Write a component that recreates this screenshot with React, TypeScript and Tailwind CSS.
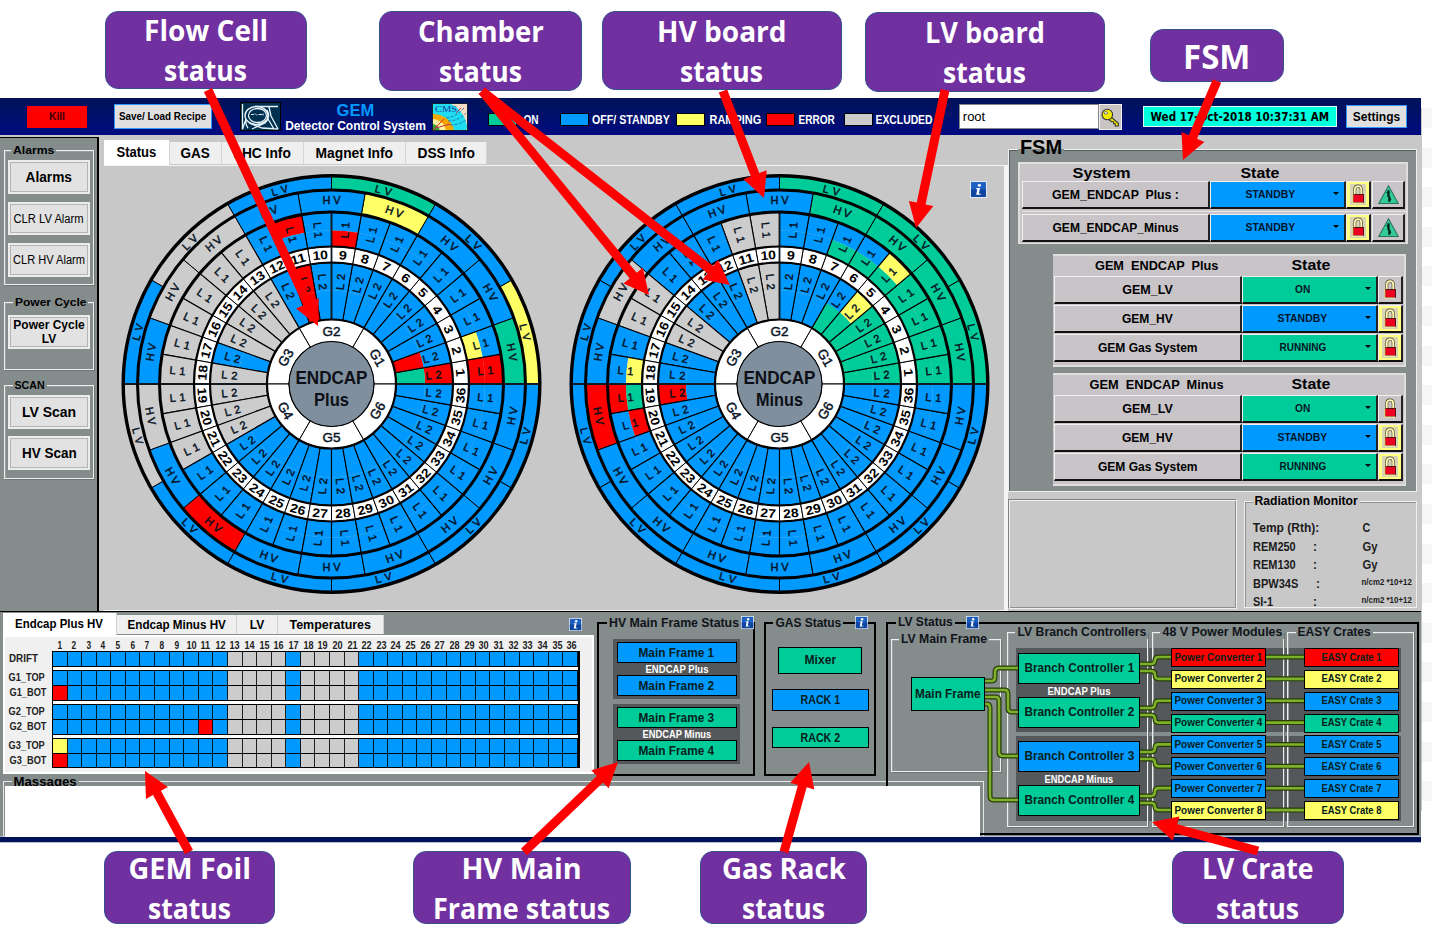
import React, { useLayoutEffect, useRef, useState } from 'react';
import clsx from 'clsx';

type Tone = 'b' | 'g' | 'r' | 'y' | 'x';

const HEX: Record<Tone, string> = { b: '#0099ff', g: '#00cc99', r: '#ff0000', y: '#ffff66', x: '#cccccc' };
const BG: Record<Tone, string> = {
  b: 'bg-[#0099ff]',
  g: 'bg-[#00cc99]',
  r: 'bg-[#ff0000]',
  y: 'bg-[#ffff66]',
  x: 'bg-[#cccccc]',
};

/* Label stretched horizontally to a fixed width */
function Fit({ w, className, children }: { w: number; className?: string; children: React.ReactNode }) {
  const ref = useRef<HTMLSpanElement>(null);
  const [k, setK] = useState(1);
  useLayoutEffect(() => {
    if (ref.current && ref.current.offsetWidth) setK(w / ref.current.offsetWidth);
  }, [w]);
  return (
    <span className={clsx('inline-flex justify-center whitespace-pre', className)} style={{ width: w }}>
      <span ref={ref} className="shrink-0" style={{ transform: `scaleX(${k})` }}>
        {children}
      </span>
    </span>
  );
}

/* ---------- icons ---------- */
function Info({ className }: { className: string }) {
  return (
    <svg viewBox="0 0 16 16" className={className}>
      <rect x="0.5" y="0.5" width="15" height="15" fill="#1c5fc0" stroke="#dfe8f4" />
      <rect x="1" y="8" width="14" height="7" fill="#0f459f" />
      <circle cx="8.8" cy="4" r="1.5" fill="#fff" />
      <path d="M6 6.6H9.4L8.3 12H10.2L10 13H5.8L6.9 7.8H5.8Z" fill="#fff" />
    </svg>
  );
}

function Lock() {
  return (
    <svg viewBox="0 0 12 20" className="h-[20px] w-[12px]">
      <path d="M2.8 11V5.5C2.8 0.9 9.2 0.9 9.2 5.5V11" fill="none" stroke="#4a4420" strokeWidth="3" />
      <path d="M2.8 11V5.5C2.8 1 9.2 1 9.2 5.5V11" fill="none" stroke="#fff8b8" strokeWidth="1.8" />
      <rect x="1" y="10.5" width="10.5" height="8" fill="#f00020" stroke="#300" strokeWidth="0.8" />
      <path d="M0.8 10V19H11" fill="none" stroke="#ffef90" strokeWidth="1" />
    </svg>
  );
}

function Warn() {
  return (
    <svg viewBox="0 0 20 19" className="h-[20px] w-[21px]">
      <path d="M10 0.8L19.3 17.5H0.7Z" fill="#33cc99" stroke="#28705a" strokeWidth="1" />
      <path d="M10 5V11.5M10.8 11V16" stroke="#06251c" strokeWidth="2.2" />
      <path d="M8 7L10 8M11 12.5L12.5 14" stroke="#06251c" strokeWidth="1" />
    </svg>
  );
}

function Key() {
  return (
    <svg viewBox="0 0 18 18" className="h-[19px] w-[19px]">
      <path d="M9 8L16.5 14.5V17H13.5V15H12V13H10L7 10.5Z" fill="#e8e000" stroke="#333" strokeWidth="1" />
      <circle cx="6" cy="6.2" r="5" fill="#f4ec00" stroke="#333" strokeWidth="1" />
      <ellipse cx="4.6" cy="4.6" rx="1.7" ry="1.2" fill="#fff" stroke="#444" strokeWidth="0.7" />
    </svg>
  );
}

function CernLogo() {
  return (
    <svg viewBox="0 0 41 29" className="h-[29px] w-[41px]">
      <rect x="0.5" y="0.5" width="40" height="28" fill="#003050" stroke="#000" />
      <g fill="none" stroke="#e8f4fa" strokeWidth="1.3">
        <path d="M2.5 2V27.5M15 4.5H38" />
        <ellipse cx="16.5" cy="13.5" rx="11.5" ry="9" />
        <ellipse cx="17.5" cy="13.5" rx="9" ry="7" />
        <path d="M27 8Q31 15 25 21L12 27M29 5L31 14L38 27M6 17L2.5 27M9 21L22 26L38 27M28 17L34 27M6 17Q5 22 8 26" />
        <path d="M11 12.5H14M15 11.5L17 13.5M18.5 12.5H22M23 11.5V13.5" strokeWidth="1" />
      </g>
    </svg>
  );
}

function CmsLogo() {
  return (
    <svg viewBox="0 0 36 28" className="h-[28px] w-[36px]">
      <rect width="36" height="28" fill="#f6dcc4" />
      <path d="M0 0H16A28 28 0 0 1 35 24L34 28H0Z" fill="#20dcf0" />
      <path d="M0 11A22 22 0 0 1 22 26L20 28H0Z" fill="#f5a800" />
      <path d="M0 16A14 14 0 0 1 14 28H0Z" fill="#fff3a0" />
      <path d="M0 21A8 8 0 0 1 8 28H0Z" fill="#35a040" />
      <g fill="none" strokeWidth="1">
        <path d="M1 27L12 16" stroke="#e02020" />
        <path d="M4 25L18 21M24 10L29 5" stroke="#c03050" />
        <path d="M14 15Q24 14 32 5M16 18Q26 18 34 10M18 22Q28 22 34 17" stroke="#2060b0" strokeWidth="0.8" strokeDasharray="3 1.5" />
      </g>
      <text x="3" y="8.5" fontSize="8.5" fontFamily="Liberation Serif, serif" fill="#2038a0" textLength="22" lengthAdjust="spacingAndGlyphs">
        CMS
      </text>
      <rect x="0.5" y="0.5" width="35" height="27" fill="none" stroke="#123" />
    </svg>
  );
}

/* ---------- detector wheels ---------- */
const CX = 212.5;
const CY = 212;
const R = { lv: 208.3, hv: 194, l1: 172, num: 137.5, l2: 121.5, g: 64.5, core: 42.5 };

function pt(r: number, deg: number): [number, number] {
  const a = (deg * Math.PI) / 180;
  return [CX + r * Math.cos(a), CY - r * Math.sin(a)];
}

function wedge(r0: number, r1: number, a0: number, a1: number) {
  const [x1, y1] = pt(r1, a0);
  const [x2, y2] = pt(r1, a1);
  const [x3, y3] = pt(r0, a1);
  const [x4, y4] = pt(r0, a0);
  return `M${x1} ${y1}A${r1} ${r1} 0 0 0 ${x2} ${y2}L${x3} ${y3}A${r0} ${r0} 0 0 1 ${x4} ${y4}Z`;
}

function tangent(a: number) {
  return a < 180 ? 90 - a : 270 - a;
}

function radial(a: number) {
  if (a < 90) return -a;
  if (a < 270) return 180 - a;
  return 360 - a;
}

interface WheelData {
  name: string;
  lv: string;
  hv: string;
  l1: string[];
  l2: string[];
}

function Label({ r, a, rot, size, w, bold, children }: { r: number; a: number; rot: number; size: number; w: number; bold?: boolean; children: string }) {
  const [x, y] = pt(r, a);
  const ink = bold ? '#000' : '#06121f';
  return (
    <text
      transform={`translate(${x} ${y}) rotate(${rot})`}
      textAnchor="middle"
      dy={size * 0.36}
      fontSize={size}
      textLength={w}
      lengthAdjust={bold ? 'spacingAndGlyphs' : 'spacing'}
      fontWeight={bold ? 'bold' : 'normal'}
      fill={ink}
      stroke={bold ? 'none' : ink}
      strokeWidth="0.45"
    >
      {children}
    </text>
  );
}

/* Each chamber code holds the outer half first, then the inner half */
function Wheel({ data }: { data: WheelData }) {
  const split = { l1: 153.5, l2: 93.5 };
  return (
    <svg viewBox="0 0 425 424" className="h-[424px] w-[425px] shrink-0" fontFamily="Liberation Sans, Arial, sans-serif">
      {data.lv.split('').map((c, i) => (
        <path key={i} d={wedge(R.hv, R.lv, i * 30, i * 30 + 30)} fill={HEX[c as Tone]} stroke="#000" strokeWidth="1" />
      ))}
      {data.hv.split('').map((c, i) => (
        <path key={i} d={wedge(R.l1, R.hv, i * 20, i * 20 + 20)} fill={HEX[c as Tone]} stroke="#000" strokeWidth="1" />
      ))}
      {data.l1.map((c, i) => (
        <g key={i}>
          <path d={wedge(split.l1, R.l1, i * 10, i * 10 + 10)} fill={HEX[c[0] as Tone]} />
          <path d={wedge(R.num, split.l1, i * 10, i * 10 + 10)} fill={HEX[(c[1] ?? c[0]) as Tone]} />
          <path d={wedge(R.num, R.l1, i * 10, i * 10 + 10)} fill="none" stroke="#000" strokeWidth="1.1" />
        </g>
      ))}
      {data.l2.map((c, i) => (
        <g key={i}>
          <path d={wedge(split.l2, R.l2, i * 10, i * 10 + 10)} fill={HEX[c[0] as Tone]} />
          <path d={wedge(R.g, split.l2, i * 10, i * 10 + 10)} fill={HEX[(c[1] ?? c[0]) as Tone]} />
          <path d={wedge(R.g, R.l2, i * 10, i * 10 + 10)} fill="none" stroke="#000" strokeWidth="1.1" />
          <path d={wedge(R.l2, R.num, i * 10, i * 10 + 10)} fill="#fff" stroke="#000" strokeWidth="1" />
        </g>
      ))}
      {[0, 60, 120, 180, 240, 300].map((a) => (
        <path key={a} d={wedge(R.core, R.g, a, a + 60)} fill="#fff" stroke="#000" strokeWidth="1" />
      ))}
      <path d={`M${CX} ${CY - R.g}V${CY - R.l1}M${CX + R.g} ${CY}H${CX + R.lv}M${CX - R.g} ${CY}H${CX - R.lv}`} stroke="#101820" strokeWidth="1.8" />
      <g fill="none" stroke="#000">
        <circle cx={CX} cy={CY} r={R.lv} strokeWidth="3.4" />
        <circle cx={CX} cy={CY} r={R.hv} strokeWidth="3" />
        <circle cx={CX} cy={CY} r={R.l1} strokeWidth="3" />
        <circle cx={CX} cy={CY} r={R.num} strokeWidth="2.2" />
        <circle cx={CX} cy={CY} r={R.l2} strokeWidth="2.2" />
        <circle cx={CX} cy={CY} r={R.g} strokeWidth="2.2" />
      </g>
      <circle cx={CX} cy={CY} r={R.core} fill="#808f9e" stroke="#000" strokeWidth="1.2" />
      {data.lv.split('').map((_, i) => (
        <Label key={i} r={200.5} a={i * 30 + 15} rot={tangent(i * 30 + 15)} size={10.5} w={17}>
          LV
        </Label>
      ))}
      {data.hv.split('').map((_, i) => (
        <Label key={i} r={183.5} a={i * 20 + 10} rot={tangent(i * 20 + 10)} size={11} w={18}>
          HV
        </Label>
      ))}
      {data.l1.map((_, i) => (
        <g key={i}>
          <Label r={154.5} a={i * 10 + 5} rot={radial(i * 10 + 5)} size={11} w={16}>
            L1
          </Label>
          <Label r={102.5} a={i * 10 + 5} rot={radial(i * 10 + 5)} size={11} w={16}>
            L2
          </Label>
          <Label r={129.5} a={i * 10 + 5} rot={tangent(i * 10 + 5)} size={12.5} w={i < 9 ? 8 : 15.5} bold>
            {String(i + 1)}
          </Label>
        </g>
      ))}
      {[1, 2, 3, 4, 5, 6].map((n) => (
        <Label key={n} r={53} a={n * 60 - 30} rot={tangent(n * 60 - 30)} size={13.5} w={18}>
          {`G${n}`}
        </Label>
      ))}
      <g fontSize="17.5" fontWeight="bold" textAnchor="middle" fill="#0c1016">
        <text x={CX} y={CY - 0.5} textLength="72" lengthAdjust="spacingAndGlyphs">
          ENDCAP
        </text>
        <text x={CX} y={CY + 22} textLength={data.name === 'Plus' ? 35 : 47} lengthAdjust="spacingAndGlyphs">
          {data.name}
        </text>
      </g>
    </svg>
  );
}

const B15 = Array<string>(15).fill('b');
const PLUS: WheelData = {
  name: 'Plus',
  lv: 'ybgbxbxbbbbb',
  hv: 'gbbybbxxbxbrbbbbbb',
  l1: ['r', 'by', 'b', 'b', 'b', 'b', 'b', 'b', 'br', 'b', 'rb', 'b', 'x', 'x', 'x', 'x', 'x', 'x', 'x', 'x', 'x', ...B15],
  l2: ['rg', 'br', 'b', 'b', 'b', 'b', 'b', 'b', 'b', 'b', 'r', 'b', 'x', 'x', 'x', 'x', 'b', 'x', 'x', 'x', 'x', ...B15],
};
const MINUS: WheelData = {
  name: 'Minus',
  lv: 'gggbbbbbbbbb',
  hv: 'ggggbbbxbrbbbbbbbb',
  l1: ['g', 'g', 'g', 'g', 'yg', 'bg', 'bg', 'b', 'b', 'x', 'x', 'b', 'b', 'b', 'x', 'x', 'b', 'by', 'rg', 'br', 'b', ...B15],
  l2: ['g', 'g', 'g', 'g', 'yg', 'bg', 'b', 'b', 'b', 'x', 'x', 'b', 'b', 'b', 'x', 'x', 'b', 'b', 'rb', 'b', 'b', ...B15],
};

/* ---------- header ---------- */
function Legend({ tone, label, w, className }: { tone: Tone; label: string; w: number; className: string }) {
  return (
    <div className={clsx('flex h-full items-center', className)}>
      <span className={clsx('h-[13px] w-[29px] border border-black', BG[tone])} />
      <Fit w={w} className="ml-[3px] text-[12px] font-bold text-white">
        {label}
      </Fit>
    </div>
  );
}

function Header() {
  return (
    <header className="flex h-[37px] shrink-0 bg-gradient-to-b from-[#001258] to-[#000a80]">
      <button className="mt-[8px] ml-[27px] flex h-[22px] w-[60px] items-center justify-center bg-[#ff0000] text-[11.5px] font-bold text-[#3a0000]">
        <Fit w={16}>Kill</Fit>
      </button>
      <button className="mt-[6px] ml-[27px] flex h-[25px] w-[98px] items-center justify-center border border-[#3399ff] bg-[#e0e0e0] text-[11px] font-bold">
        <Fit w={87}>Save/ Load Recipe</Fit>
      </button>
      <div className="mt-[4px] ml-[28px]">
        <CernLogo />
      </div>
      <div className="mt-[4px] ml-[3px] flex w-[143px] flex-col items-center font-bold">
        <Fit w={38} className="text-[17px] leading-[18px] text-[#0099ff]">GEM</Fit>
        <Fit w={141} className="text-[12px] leading-[12px] text-white">Detector Control System</Fit>
      </div>
      <div className="mt-[5px] ml-[5px]">
        <CmsLogo />
      </div>
      <div className="flex pt-[6px]">
        <Legend tone="g" label="ON" w={15} className="ml-[20px] [&>span:last-child]:ml-[6px]" />
        <Legend tone="b" label="OFF/ STANDBY" w={78} className="ml-[22px]" />
        <Legend tone="y" label="RAMPING" w={52} className="ml-[6px] [&>span:last-child]:ml-[4px]" />
        <Legend tone="r" label="ERROR" w={36} className="ml-[5px] [&>span:last-child]:ml-[4px]" />
        <Legend tone="x" label="EXCLUDED" w={57} className="ml-[9px] [&>span:last-child]:ml-[2px]" />
      </div>
      <div className="mt-[6px] ml-auto flex h-[26px] w-[163px]">
        <div className="h-[25px] w-[140px] border border-[#888] bg-white pl-[3px] text-[13px] leading-[23px]">
          <Fit w={22}>root</Fit>
        </div>
        <div className="flex h-[26px] w-[23px] items-center justify-center border border-[#f0f0f0] bg-[#c8c4c4]">
          <Key />
        </div>
      </div>
      <div className="mt-[8px] ml-[21px] flex h-[21px] w-[194px] items-center justify-center border border-[#d8f8f0] bg-[#00ffdd] font-['DejaVu_Sans'] text-[11.5px] leading-none font-bold">
        <Fit w={179} className="pt-[2px]">Wed 17-Oct-2018 10:37:31 AM</Fit>
      </div>
      <button className="mt-[7px] mr-[14px] ml-[9px] flex h-[23px] w-[61px] items-center justify-center border border-[#3399ff] bg-[#e0e0e0] text-[12px] font-bold">
        <Fit w={47}>Settings</Fit>
      </button>
    </header>
  );
}

/* ---------- group frame ---------- */
function Group({
  title,
  w,
  className,
  titleClass,
  children,
}: {
  title: string;
  w: number;
  className: string;
  titleClass: string;
  children?: React.ReactNode;
}) {
  return (
    <section className={clsx('relative shrink-0', className)}>
      <h2 className={clsx('absolute flex px-[2px] leading-none font-bold', titleClass)}>
        <Fit w={w}>{title}</Fit>
      </h2>
      {children}
    </section>
  );
}

const ETCH = 'border border-[#eef0f0] shadow-[inset_1px_1px_0_#9a9f9f,1px_1px_0_#6c7474]';

function SideButton({ label, w, className }: { label: string; w: number; className: string }) {
  return (
    <button className={clsx('flex w-[82px] shrink-0 items-center justify-center border-2 border-[#ececec] bg-[#e2e2e2] shadow-[inset_0_0_0_1px_#b4b4b4]', className)}>
      <Fit w={w}>{label}</Fit>
    </button>
  );
}

function Sidebar() {
  return (
    <aside className="flex w-[99px] shrink-0 flex-col border-t border-r-2 border-black bg-[#848c8c] pl-[4px]">
      <Group title="Alarms" w={41} className={clsx('mt-[12px] flex h-[135px] w-[90px] flex-col gap-[8px] pt-[9px] pl-[3px]', ETCH)} titleClass="left-[6px] -top-[6px] bg-[#848c8c] text-[11px]">
        <SideButton label="Alarms" w={46} className="h-[34px] text-[14px] font-bold" />
        <SideButton label="CLR LV Alarm" w={70} className="h-[33px] text-[12px]" />
        <SideButton label="CLR HV Alarm" w={72} className="h-[34px] text-[12px]" />
      </Group>
      <Group title="Power Cycle" w={71} className={clsx('mt-[17px] h-[68px] w-[90px] pt-[12px] pl-[3px]', ETCH)} titleClass="left-[8px] -top-[6px] bg-[#848c8c] text-[11px]">
        <button className="flex h-[34px] w-[82px] flex-col items-center justify-center border-2 border-[#ececec] bg-[#e2e2e2] text-[12px] leading-[14px] font-bold shadow-[inset_0_0_0_1px_#b4b4b4]">
          <Fit w={71}>Power Cycle</Fit>
          <Fit w={14}>LV</Fit>
        </button>
      </Group>
      <Group title="SCAN" w={30} className={clsx('mt-[15px] flex h-[94px] w-[90px] flex-col gap-[7px] pt-[9px] pl-[3px]', ETCH)} titleClass="left-[8px] -top-[6px] bg-[#848c8c] text-[11px]">
        <SideButton label="LV Scan" w={54} className="h-[34px] text-[14px] font-bold" />
        <SideButton label="HV Scan" w={55} className="h-[34px] text-[14px] font-bold" />
      </Group>
    </aside>
  );
}

/* ---------- centre panel ---------- */
function CenterTab({ label, w, className }: { label: string; w: number; className: string }) {
  return (
    <div className={clsx('flex items-center justify-center border-r border-[#d4d4d4] text-[14px] font-bold', className)}>
      <Fit w={w}>{label}</Fit>
    </div>
  );
}

function CenterPanel() {
  return (
    <main className="ml-[5px] flex w-[904px] shrink-0 flex-col">
      <nav className="flex h-[28px] items-end">
        <CenterTab label="Status" w={40} className="h-[25px] w-[66px] bg-white" />
        <CenterTab label="GAS" w={29} className="mb-px h-[22px] w-[52px] bg-[#efefef]" />
        <CenterTab label="LHC Info" w={57} className="mb-px h-[22px] w-[82px] bg-[#efefef]" />
        <CenterTab label="Magnet Info" w={78} className="mb-px h-[22px] w-[102px] bg-[#efefef]" />
        <CenterTab label="DSS Info" w={57} className="mb-px h-[22px] w-[81px] bg-[#efefef]" />
      </nav>
      <div className="relative flex flex-1 gap-[23px] border-t border-r-4 border-b border-[#f4f4f4] bg-[#c8c8c8] pt-[6px] pl-[15px]">
        <Wheel data={PLUS} />
        <Wheel data={MINUS} />
        <Info className="absolute top-[15px] right-[17px] h-[17px] w-[17px]" />
      </div>
    </main>
  );
}

/* ---------- FSM ---------- */
const CELL = 'flex items-center justify-center border-t border-l border-r-2 border-b-2 border-t-[#f0f0f0] border-l-[#f0f0f0] border-r-[#222] border-b-[#111] font-bold';

function FsmRow({ name, nameW, state, tone, stateW, lit, warn }: { name: string; nameW: number; state: string; tone: Tone; stateW: number; lit?: boolean; warn?: boolean }) {
  return (
    <div className="flex h-[28px]">
      <div className={clsx(CELL, 'w-[188px] bg-[#c8c4c8] pt-px text-[12.5px]')}>
        <Fit w={nameW}>{name}</Fit>
      </div>
      <div className={clsx(CELL, 'relative w-[136px] pt-px pr-[14px] text-[11.5px] text-[#001428]', BG[tone])}>
        <Fit w={stateW}>{state}</Fit>
        <span className="absolute top-[10px] right-[5px] border-x-[3px] border-t-[3px] border-x-transparent border-t-black" />
      </div>
      <div className={clsx(CELL, 'w-[25px]', lit ? 'bg-[#ffff80]' : 'bg-[#c8c4c8]')}>
        <span className={clsx('flex h-[21px] w-[16px] justify-center', lit && 'bg-[#d8d4b8]')}>
          <Lock />
        </span>
      </div>
      {warn && (
        <div className={clsx(CELL, 'ml-px w-[33px] bg-[#c8c4c8]')}>
          <Warn />
        </div>
      )}
    </div>
  );
}

function EndcapFsm({ title, w, className }: { title: string; w: number; className: string }) {
  return (
    <div className={clsx('ml-[44px] h-[113px] w-[353px] border-2 border-l-0 border-[#dedede] bg-[#c8c4c8] pl-px', className)}>
      <div className="flex h-[20px] items-center font-bold">
        <div className="flex w-[198px] justify-center pl-[8px] text-[12.5px]">
          <Fit w={w}>{title}</Fit>
        </div>
        <div className="flex w-[118px] justify-center pb-[2px] text-[15.5px] leading-none">
          <Fit w={39}>State</Fit>
        </div>
      </div>
      <div className="flex flex-col gap-[1px]">
        <FsmRow name="GEM_LV" nameW={50} state="ON" stateW={15} tone="g" />
        <FsmRow name="GEM_HV" nameW={51} state="STANDBY" stateW={50} tone="b" lit />
        <FsmRow name="GEM Gas System" nameW={100} state="RUNNING" stateW={47} tone="g" lit />
      </div>
    </div>
  );
}

function RightPanel() {
  const rad: [string, number, string, number, boolean][] = [
    ['Temp (Rth):', 66, 'C', 8, false],
    ['REM250', 43, 'Gy', 15, false],
    ['REM130', 43, 'Gy', 15, false],
    ['BPW34S', 45, 'n/cm2 *10+12', 50, true],
    ['SI-1', 20, 'n/cm2 *10+12', 50, true],
  ];
  return (
    <div className="flex w-[413px] shrink-0 flex-col">
      <Group
        title="FSM"
        w={42}
        className="mt-[12px] h-[343px] w-[409px] border border-[#f0f0f0] bg-[#848c8c] shadow-[inset_1px_1px_0_#5a6060]"
        titleClass="left-[9px] -top-[13px] text-[20px] bg-[linear-gradient(#c8c8c8_12px,#848c8c_12px)]"
      >
        <div className="mt-[12px] ml-[9px] h-[82px] w-[390px] border-2 border-b-[1px] border-[#dedede] bg-[#c8c4c8] pl-[2px]">
          <div className="flex h-[17px] items-center text-[15.5px] leading-none font-bold">
            <div className="flex w-[160px] justify-center">
              <Fit w={58}>System</Fit>
            </div>
            <div className="flex w-[156px] justify-center">
              <Fit w={39}>State</Fit>
            </div>
          </div>
          <FsmRow name="GEM_ENDCAP  Plus :" nameW={127} state="STANDBY" stateW={50} tone="b" lit warn />
          <div className="mt-[2px] mb-[2px] h-px bg-[#e8e8e8]" />
          <FsmRow name="GEM_ENDCAP_Minus" nameW={126} state="STANDBY" stateW={50} tone="b" lit warn />
        </div>
        <EndcapFsm title="GEM  ENDCAP  Plus" w={123} className="mt-[10px]" />
        <EndcapFsm title="GEM  ENDCAP  Minus" w={134} className="mt-[6px]" />
      </Group>
      <div className="mt-[7px] flex">
        <div className="h-[110px] w-[229px] border border-[#808080] border-r-[#f0f0f0] border-b-[#f0f0f0] shadow-[inset_1px_1px_0_#f0f0f0,inset_-1px_-1px_0_#909090]" />
        <Group title="Radiation Monitor" w={103} className="mt-[2px] ml-[7px] h-[107px] w-[173px] border border-[#f0f0f0] pt-[17px] pl-[8px] shadow-[inset_1px_1px_0_#909090]" titleClass="left-[8px] -top-[7px] bg-[#c8c8c8] text-[12.5px]">
          {rad.map(([n, w, v, vw, small], i) => (
            <div key={n} className="flex h-[18.5px] items-center text-[12px] font-bold text-[#1c1c1c]">
              <span className="flex w-[60px]">
                <Fit w={w}>{n}</Fit>
              </span>
              <span className={i === 3 ? 'w-[49px] pl-[3px]' : 'w-[49px]'}>{i > 0 ? ':' : ''}</span>
              <Fit w={vw} className={small ? 'pb-[3px] text-[9px]' : ''}>
                {v}
              </Fit>
            </div>
          ))}
        </Group>
      </div>
    </div>
  );
}

/* ---------- foil table ---------- */
function foil(bad: Record<number, Tone>): Tone[] {
  return Array.from({ length: 36 }, (_, i) => {
    const n = i + 1;
    if (bad[n]) return bad[n];
    return n >= 13 && n <= 21 && n !== 17 ? 'x' : 'b';
  });
}

const FOILS: { name: string; w: number; cells: Tone[]; gap: boolean }[] = [
  { name: 'DRIFT', w: 29, cells: foil({}), gap: true },
  { name: 'G1_TOP', w: 36, cells: foil({}), gap: false },
  { name: 'G1_BOT', w: 37, cells: foil({ 1: 'r' }), gap: true },
  { name: 'G2_TOP', w: 36, cells: foil({}), gap: false },
  { name: 'G2_BOT', w: 37, cells: foil({ 11: 'r' }), gap: true },
  { name: 'G3_TOP', w: 36, cells: foil({ 1: 'y' }), gap: false },
  { name: 'G3_BOT', w: 37, cells: foil({ 1: 'r' }), gap: false },
];

function FoilPanel() {
  const tabs: [string, number, string][] = [
    ['Endcap Plus HV', 88, 'h-[22px] w-[114px] bg-white'],
    ['Endcap Minus HV', 98, 'h-[19px] mb-[1px] w-[120px] bg-[#efefef]'],
    ['LV', 14, 'h-[19px] mb-[1px] w-[41px] bg-[#efefef]'],
    ['Temperatures', 81, 'h-[19px] mb-[1px] w-[106px] bg-[#efefef]'],
  ];
  return (
    <div className="relative w-[594px] shrink-0 pl-[3px]">
      <div className="flex h-[23px] items-end">
        {tabs.map(([t, w, c]) => (
          <div key={t} className={clsx('flex items-center justify-center border-r border-[#d0d0d0] text-[12px] font-bold', c)}>
            <Fit w={w}>{t}</Fit>
          </div>
        ))}
      </div>
      <Info className="absolute top-[6px] left-[569px] h-[13px] w-[13px]" />
      <div className="h-[139px] w-[591px] border-2 border-white bg-[#f0f0f0] pt-[3px] pl-[4px]">
        <div className="ml-[43px] flex h-[11px] w-[527px]">
          {Array.from({ length: 36 }, (_, i) => (
            <span key={i} className="flex flex-1 justify-center text-[10px] leading-[11px] font-bold text-[#222]">
              <Fit w={i < 9 ? 5 : 10}>{i + 1}</Fit>
            </span>
          ))}
        </div>
        {FOILS.map((f) => (
          <div key={f.name} className={clsx('flex', f.gap ? 'h-[19px]' : 'h-[15px]')}>
            <div className="flex h-[15px] w-[43px] items-center text-[10.5px] font-bold text-[#222]">
              <Fit w={f.w}>{f.name}</Fit>
            </div>
            <div className="flex w-[528px] flex-col border-r-2 border-black">
              <div className="flex h-[15px] border-t border-l border-black">
                {f.cells.map((c, i) => (
                  <span key={i} className={clsx('flex-1 border-r border-black/85', BG[c])} />
                ))}
              </div>
              {f.gap && <span className="h-[4px] border-t border-l border-black bg-white" />}
              {f.name === 'G3_BOT' && <span className="h-px bg-black" />}
            </div>
          </div>
        ))}
      </div>
    </div>
  );
}

/* ---------- status boxes ---------- */
function Box({ label, w, tone, className }: { label: string; w: number; tone: Tone; className: string }) {
  return (
    <div className={clsx('relative flex shrink-0 items-center justify-center border border-black text-[#06201c]', BG[tone], className)}>
      <Fit w={w}>{label}</Fit>
    </div>
  );
}

function Caption({ label, className, w = 63 }: { label: string; className: string; w?: number }) {
  return (
    <div className={clsx('relative flex items-center justify-center text-[10px] font-bold text-white', className)}>
      <Fit w={w}>{label}</Fit>
    </div>
  );
}

const BLACK_TITLE = '-top-[7px] bg-[#848c8c] text-[12.5px] text-[#10141a]';

function HvFrames() {
  const b = 'h-[21px] w-[120px] text-[12px] font-bold';
  return (
    <Group title="HV Main Frame Status" w={130} className="mt-[10px] ml-[3px] h-[154px] w-[158px] border-2 border-black pt-[15px] pl-[14px]" titleClass={clsx('left-[8px]', BLACK_TITLE)}>
      <Info className="absolute -top-[8px] -right-[1px] h-[13px] w-[13px]" />
      <div className="flex h-[60px] w-[127px] flex-col items-center bg-[#55585a] pt-[3px]">
        <Box label="Main Frame 1" w={76} tone="b" className={b} />
        <Caption label="ENDCAP Plus" className="h-[12px]" />
        <Box label="Main Frame 2" w={76} tone="b" className={b} />
      </div>
      <div className="mt-[5px] flex h-[60px] w-[127px] flex-col items-center bg-[#55585a] pt-[3px]">
        <Box label="Main Frame 3" w={76} tone="g" className={b} />
        <Caption label="ENDCAP Minus" w={69} className="h-[12px]" />
        <Box label="Main Frame 4" w={76} tone="g" className={b} />
      </div>
    </Group>
  );
}

function GasStatus() {
  return (
    <Group title="GAS Status" w={66} className="mt-[10px] ml-[9px] flex h-[154px] w-[112px] flex-col items-center border-2 border-black pt-[23px]" titleClass={clsx('left-[7px]', BLACK_TITLE)}>
      <Info className="absolute -top-[8px] right-[6px] h-[13px] w-[13px]" />
      <Box label="Mixer" w={32} tone="g" className="h-[27px] w-[84px] text-[12.5px] font-bold" />
      <Box label="RACK 1" w={40} tone="b" className="mt-[15px] h-[22px] w-[97px] text-[12px] font-bold" />
      <Box label="RACK 2" w={40} tone="g" className="mt-[16px] h-[21px] w-[97px] text-[12px] font-bold" />
    </Group>
  );
}

const CRATES: Tone[] = ['r', 'y', 'b', 'g', 'b', 'b', 'b', 'y'];

/* Wire coordinates share the origin of the LV status frame */
const WIRES = [
  'M98 59H106Q109 59 109 55V50Q109 46 113 46H132',
  'M98 68H119Q122 68 122 72V86Q122 90 126 90H132',
  'M98 75H110Q113 75 113 79V130Q113 134 117 134H132',
  'M98 82H101Q104 82 104 86V174Q104 178 108 178H132',
  ...[0, 1, 2, 3].flatMap((i) => {
    const y = [46, 90, 134, 178][i];
    const a = 35 + i * 43.7;
    const b = a + 21.9;
    return [`M253 ${y - 4}H265Q269 ${y - 4} 269 ${a + 3}Q269 ${a} 273 ${a}H286`, `M253 ${y + 3}H265Q269 ${y + 3} 269 ${y + 7}Q269 ${b} 273 ${b}H286`];
  }),
  ...CRATES.map((_, i) => `M379 ${35 + i * 21.87}H419`),
];

function LvStatus() {
  const big = 'w-[122px] text-[12.5px] font-bold';
  const title = '-top-[7px] bg-[#848c8c] text-[12.5px] text-[#10141a]';
  return (
    <Group title="LV Status" w={55} className="mt-[10px] flex h-[213px] w-[533px] border-2 border-black pl-[3px]" titleClass={clsx('left-[8px] !-top-[8px]', BLACK_TITLE)}>
      <Info className="absolute -top-[8px] left-[78px] h-[13px] w-[13px]" />
      <div className="absolute top-[24px] left-[128px] h-[84px] w-[385px] bg-[#55585a]" />
      <div className="absolute top-[112px] left-[128px] h-[85px] w-[385px] bg-[#55585a]" />
      <Group title="LV Main Frame" w={86} className={clsx('mt-[15px] h-[133px] w-[110px] pt-[37px] pl-[19px]', ETCH)} titleClass={clsx('left-[7px]', title)}>
        <Box label="Main Frame" w={65} tone="g" className="z-10 h-[34px] w-[74px] text-[12.5px] font-bold" />
      </Group>
      <Group title="LV Branch Controllers" w={129} className={clsx('mt-[8px] ml-[6px] h-[195px] w-[141px] pt-[20px] pl-[10px]', ETCH)} titleClass={clsx('left-[7px]', title)}>
        <Box label="Branch Controller 1" w={110} tone="g" className={clsx('z-10 h-[31px]', big)} />
        <Caption label="ENDCAP Plus" className="h-[13px] w-[122px] pt-[2px]" />
        <Box label="Branch Controller 2" w={110} tone="g" className={clsx('z-10 h-[31px]', big)} />
        <Box label="Branch Controller 3" w={110} tone="b" className={clsx('z-10 mt-[13px] h-[31px]', big)} />
        <Caption label="ENDCAP Minus" w={69} className="h-[13px] w-[122px] pt-[2px]" />
        <Box label="Branch Controller 4" w={110} tone="g" className={clsx('z-10 h-[31px]', big)} />
      </Group>
      <Group title="48 V Power Modules" w={120} className={clsx('mt-[8px] ml-[4px] h-[195px] w-[132px] pt-[15px] pl-[18px]', ETCH)} titleClass={clsx('left-[7px]', title)}>
        <div className="flex h-[172px] w-[95px] flex-col justify-between">
          {CRATES.map((c, i) => (
            <Box key={i} label={`Power Converter ${i + 1}`} w={88} tone={c} className="z-10 h-[19px] w-[95px] text-[10.5px] font-bold" />
          ))}
        </div>
      </Group>
      <Group title="EASY Crates" w={73} className={clsx('mt-[8px] ml-[3px] h-[195px] w-[127px] pt-[15px] pl-[16px]', ETCH)} titleClass={clsx('left-[8px]', title)}>
        <div className="flex h-[172px] w-[95px] flex-col justify-between">
          {CRATES.map((c, i) => (
            <Box key={i} label={`EASY Crate ${i + 1}`} w={60} tone={c} className="z-10 h-[19px] w-[95px] text-[10.5px] font-bold" />
          ))}
        </div>
      </Group>
      <svg viewBox="0 0 530 210" className="absolute -top-[2px] -left-[2px] h-[210px] w-[530px]" fill="none">
        {WIRES.map((d) => (
          <path key={d} d={d} stroke="#263c08" strokeWidth="5" />
        ))}
        {WIRES.map((d) => (
          <path key={d} d={d} stroke="#7fb02c" strokeWidth="2.6" />
        ))}
      </svg>
    </Group>
  );
}

function BottomPanel() {
  return (
    <div className="flex h-[225px] shrink-0 border-t border-black bg-[#848c8c]">
      <div className="flex w-[886px] shrink-0 flex-col">
        <div className="flex h-[165px]">
          <FoilPanel />
          <HvFrames />
          <GasStatus />
        </div>
        <div className="relative mt-[4px] ml-[3px] h-[55px] w-[981px] border-t border-l border-r border-[#e8e8e8]">
          <h2 className="absolute -top-[7px] left-[8px] flex bg-[#848c8c] px-[2px] text-[13px] leading-[14px] font-bold">
            <Fit w={63}>Massages</Fit>
          </h2>
          <div className="relative z-10 mt-[4px] ml-px h-[51px] w-[975px] bg-white" />
        </div>
      </div>
      <LvStatus />
    </div>
  );
}

/* ---------- annotations ---------- */
function Callout({ lines, className }: { lines: [string, number][]; className: string }) {
  return (
    <div className={clsx("flex shrink-0 flex-col items-center justify-center rounded-[13px] border-[1.5px] border-[#34508f] bg-[#7030a0] font-['Open_Sans'] text-[28.5px] leading-[40px] font-bold text-white", className)}>
      {lines.map(([t, w]) => (
        <Fit key={t} w={w}>
          {t}
        </Fit>
      ))}
    </div>
  );
}

const ARROWS: [number, number, number, number][] = [
  [208, 90, 318, 326],
  [482, 91, 649, 295],
  [482, 91, 730, 285],
  [723, 91, 764, 198],
  [945, 90, 916, 228],
  [1217, 81, 1183, 160],
  [189, 852, 145, 771],
  [524, 852, 618, 762],
  [784, 852, 809, 762],
  [1258, 851, 1152, 822],
];

function Arrows() {
  return (
    <svg viewBox="0 0 1432 948" className="pointer-events-none absolute inset-0 z-30 h-[948px] w-[1432px]" fill="#ff0000">
      {ARROWS.map(([x0, y0, x1, y1], i) => {
        const len = Math.hypot(x1 - x0, y1 - y0);
        const deg = (Math.atan2(y1 - y0, x1 - x0) * 180) / Math.PI;
        return (
          <path key={i} transform={`translate(${x0} ${y0}) rotate(${deg})`} d={`M0 -4.5H${len - 25}V-12.5L${len} 0L${len - 25} 12.5V4.5H0Z`} />
        );
      })}
    </svg>
  );
}

export default function App() {
  return (
    <div className="relative flex h-[948px] w-[1432px] flex-col overflow-hidden bg-white font-['Liberation_Sans',Arial,sans-serif] text-black">
      <div className="flex h-[98px] shrink-0 items-start pl-[105px]">
        <Callout lines={[['Flow Cell', 124], ['status', 83]]} className="mt-[11px] h-[78px] w-[202px]" />
        <Callout lines={[['Chamber', 126], ['status', 83]]} className="mt-[11px] ml-[72px] h-[80px] w-[203px]" />
        <Callout lines={[['HV board', 130], ['status', 83]]} className="mt-[11px] ml-[20px] h-[79px] w-[240px]" />
        <Callout lines={[['LV board', 120], ['status', 83]]} className="mt-[12px] ml-[23px] h-[80px] w-[240px]" />
        <Callout lines={[['FSM', 67]]} className="mt-[29px] ml-[45px] h-[53px] w-[134px] !text-[34px]" />
      </div>
      <div className="flex h-[745px]">
        <div className="flex w-[1421px] shrink-0 flex-col bg-[#c8c8c8]">
          <Header />
          <div className="flex h-[476px] pt-[2px]">
            <Sidebar />
            <CenterPanel />
            <RightPanel />
          </div>
          <BottomPanel />
          <div className="h-[7px] shrink-0 border-t border-b border-[#b8bcd0] bg-[#001258]" />
        </div>
        <div className="mt-[10px] h-[703px] flex-1 border-l border-[#c8c8c8] bg-[repeating-linear-gradient(#f6f6f6_0_20px,#ffffff_20px_39.6px)]" />
      </div>
      <div className="flex shrink-0 items-start pt-[8px] pl-[104px]">
        <Callout lines={[['GEM Foil', 123], ['status', 83]]} className="h-[73px] w-[171px]" />
        <Callout lines={[['HV Main', 120], ['Frame status', 177]]} className="ml-[138px] h-[73px] w-[218px]" />
        <Callout lines={[['Gas Rack', 124], ['status', 83]]} className="ml-[69px] h-[73px] w-[167px]" />
        <Callout lines={[['LV Crate', 112], ['status', 83]]} className="ml-[305px] h-[73px] w-[172px]" />
      </div>
      <Arrows />
    </div>
  );
}
